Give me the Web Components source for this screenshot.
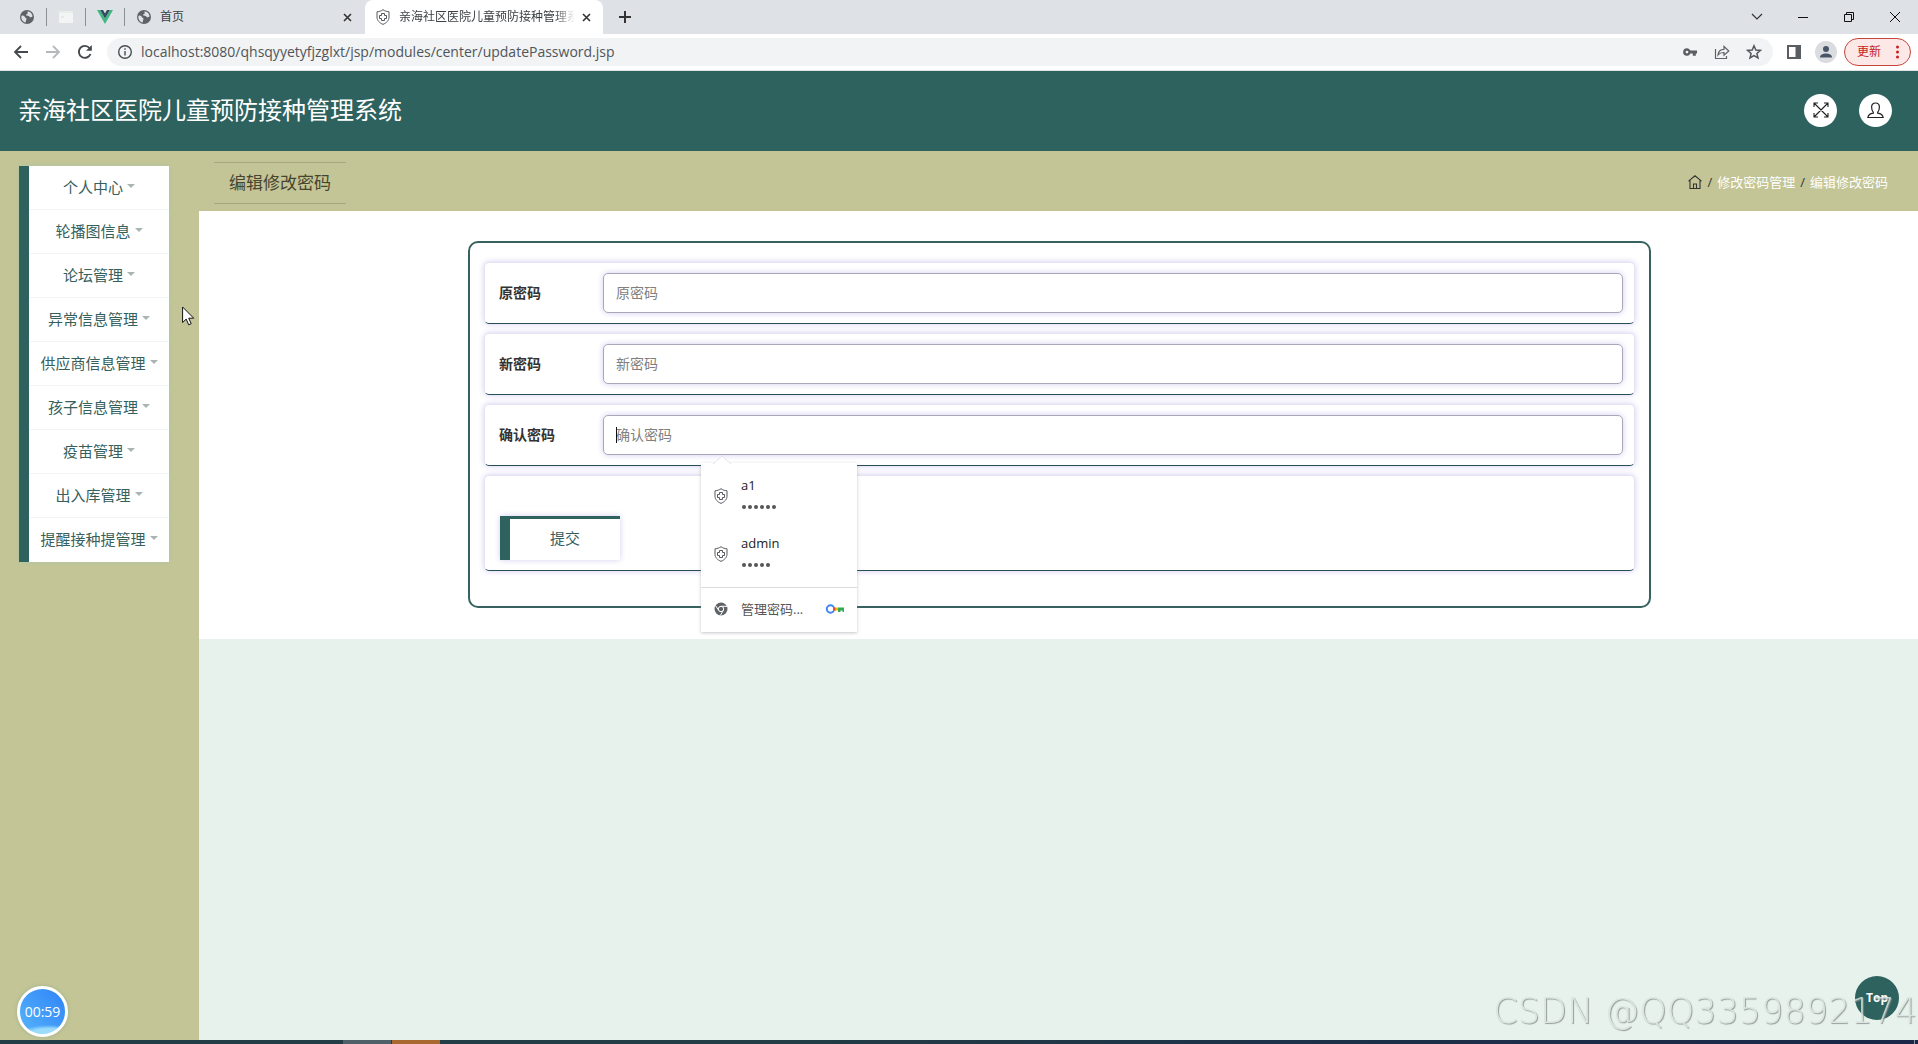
<!DOCTYPE html>
<html lang="zh-CN">
<head>
<meta charset="utf-8">
<title>亲海社区医院儿童预防接种管理系统</title>
<style>
html,body{margin:0;height:100%}
body{font-family:"Open Sans","Noto Sans CJK SC",sans-serif;font-size:14px;color:#333;
--teal:#2e625f;--olive:#c3c596;--mint:#e7f2ec;overflow:hidden}
</style>
</head>
<body>
<app-page></app-page>
<script>
const define=(name,html)=>{
  const t=document.createElement('template');
  t.innerHTML='<style>*{box-sizing:border-box}svg{display:block;flex:none}button{font:inherit;border:0;background:none;padding:0;margin:0;color:inherit}a{color:inherit;text-decoration:none}</style>'+html;
  customElements.define(name,class extends HTMLElement{
    constructor(){super();this.attachShadow({mode:'open'}).append(t.content.cloneNode(true));}
    connectedCallback(){
      const r=this.shadowRoot;
      r.querySelectorAll('[data-attr]').forEach(n=>{
        const v=this.getAttribute(n.dataset.attr)||'';
        if(n.tagName==='INPUT'){n.placeholder=v}else n.textContent=v;
      });
    }
  });
};
const globe='<svg width="16" height="16" viewBox="0 0 16 16"><circle cx="8" cy="8" r="7" fill="#5f6368"/><path d="M3 6.5c1.500 0 2.500.5 2.800 1.500.3.9 1.700.6 1.700 1.900 0 1-.6 1-.6 2.100 0 .8-.2 1.500-.9 1.500C3.500 12.600 2 10 2.300 7.500zM8.500 2.600c-.2 1 .4 1.300 0 2.100-.4.700-1.400.5-1.400 1.300 0 .9 1.600.7 2.500 1 .9.400.9 1.300 1.800 1.300.9 0 1.700-.3 2.100-1C13.300 4.500 11 2.600 8.500 2.600z" fill="#dee1e6"/></svg>';
const shield='<svg width="16" height="16" viewBox="0 0 16 16" fill="none" stroke="#55585c"><path d="M8 .7C9.600 1.900 11.600 2.600 14 2.800v5.400c0 3.200-2.400 5.600-6 7.200-3.600-1.600-6-4-6-7.200V2.800C4.400 2.600 6.400 1.900 8 .7z"/><path stroke-linejoin="round" d="M6.500 4.500h3v2h2v3h-2v2h-3v-2h-2v-3h2z"/></svg>';
const close='<svg width="9" height="9" viewBox="0 0 9 9" stroke="#333" stroke-width="1.600"><path d="M1 1l7 7M8 1 1 8"/></svg>';

define('browser-tabs',`<style>
:host{display:flex;height:34px;background:#dee1e6;align-items:center;font-size:12px;color:#3c4043;flex:none}
.pin{width:38px;display:flex;justify-content:center}
.first{width:46px;padding-left:19px;display:flex}
.sep{width:1px;height:18px;background:#8b8e93}
.tab{display:flex;align-items:center;gap:8px;height:34px;line-height:16px}
.idle{width:240px;padding:0 13px 0 11px}
.active{width:238px;background:#fff;border-radius:8px 8px 0 0;padding:0 12px 0 10px}
.name{flex:1;min-width:0;white-space:nowrap;overflow:hidden}
.active .name{-webkit-mask-image:linear-gradient(90deg,#000 155px,transparent 176px);mask-image:linear-gradient(90deg,#000 155px,transparent 176px)}
.plus{margin-left:16px}
.win{margin-left:auto;display:flex;height:28px;align-items:center}
.win button{width:46px;display:flex;justify-content:center}
</style>
<div class="first">${globe}</div><i class="sep"></i>
<div class="pin"><svg width="16" height="16" viewBox="0 0 16 16"><path d="M1 2h14v12H1z" fill="#f3f4f4"/><path d="M1 2h14v2H1z" fill="#e8eee9"/><path d="M3 8h3" stroke="#dcdedf"/></svg></div><i class="sep"></i>
<div class="pin"><svg width="16" height="16" viewBox="0 0 16 16"><path d="M0 1h3.200L8 9.400 12.800 1H16L8 15z" fill="#41b883"/><path d="M3.200 1H6l2 3.500L10 1h2.800L8 9.400z" fill="#35495e"/></svg></div><i class="sep"></i>
<div class="tab idle">${globe}<span class="name">首页</span><button aria-label="关闭">${close}</button></div>
<div class="tab active">${shield}<span class="name">亲海社区医院儿童预防接种管理系统</span><button aria-label="关闭">${close}</button></div>
<button class="plus" aria-label="新标签页"><svg width="12" height="12" viewBox="0 0 12 12" stroke="#333" stroke-width="2"><path d="M6 0v12M0 6h12"/></svg></button>
<div class="win">
<button aria-label="搜索标签页"><svg width="12" height="8" viewBox="0 0 12 8" fill="none" stroke="#333" stroke-width="1.200"><path d="M1 1l5 5 5-5"/></svg></button>
<button aria-label="最小化"><svg width="10" height="10" viewBox="0 0 10 10" stroke="#111"><path d="M0 5.500h10"/></svg></button>
<button aria-label="还原"><svg width="10" height="10" viewBox="0 0 10 10" fill="none" stroke="#111"><path d="M.5 2.500h7v7h-7zM2.500 2.500v-2h7v7h-2"/></svg></button>
<button aria-label="关闭窗口"><svg width="10" height="10" viewBox="0 0 10 10" stroke="#111"><path d="M0 0l10 10M10 0 0 10"/></svg></button>
</div>`);

define('browser-toolbar',`<style>
:host{display:flex;height:37px;background:#fff;align-items:center;padding:0 7px 1px 12px;border-bottom:1px solid #dfe3e3;flex:none;box-sizing:border-box}
.navs{display:flex;gap:14px}
.bar{flex:1;display:flex;align-items:center;height:28px;border-radius:14px;background:#f1f3f4;margin-left:13px;padding:0 11px 0 10px;gap:8px}
input{flex:1;min-width:0;border:0;background:none;outline:0;padding:0;font:14px/20px "Open Sans","Noto Sans CJK SC",sans-serif;color:#50555a}
.acts{display:flex;gap:16px}
.panel{margin-left:14px}
.me{margin:0 7px 0 14px}
.upd{display:flex;align-items:center;justify-content:space-between;width:67px;height:28px;border:1px solid #c5453d;border-radius:14px;background:#fce8e6;color:#c5221f;font-size:12px;padding:0 11px 0 12px;line-height:16px}
</style>
<div class="navs">
<button aria-label="后退"><svg width="18" height="18" viewBox="0 0 18 18" fill="none" stroke="#45494d" stroke-width="1.800"><path d="M16 9H3M9 3 3 9l6 6"/></svg></button>
<button aria-label="前进"><svg width="18" height="18" viewBox="0 0 18 18" fill="none" stroke="#b6b9bc" stroke-width="1.800"><path d="M2 9h13M9 3l6 6-6 6"/></svg></button>
<button aria-label="刷新"><svg width="18" height="18" viewBox="0 0 18 18" fill="none" stroke="#45494d" stroke-width="1.900"><path d="M14.500 11A6 6 0 1 1 13.500 5L15 6.500"/><path d="M15.800 2v5.800H10z" fill="#45494d" stroke="none"/></svg></button>
</div>
<div class="bar">
<svg width="16" height="16" viewBox="0 0 16 16" fill="none" stroke="#4a4e52" stroke-width="1.400"><circle cx="8" cy="8" r="6.300"/><path d="M8 7v4.500M8 4.300v1.500"/></svg>
<input aria-label="地址" value="localhost:8080/qhsqyyetyfjzglxt/jsp/modules/center/updatePassword.jsp">
<div class="acts">
<svg width="16" height="16" viewBox="0 0 16 16"><path fill="#5a5e62" fill-rule="evenodd" d="M5 4.200c1.600 0 2.800 1 3.400 2.400H15v3h-1.200v2.200h-3V9.600H8.400A3.800 3.800 0 1 1 5 4.200zm0 2.500a1.400 1.400 0 1 0 0 2.800 1.400 1.400 0 0 0 0-2.800z"/></svg>
<svg width="16" height="16" viewBox="0 0 16 16" fill="none" stroke="#5f6368" stroke-width="1.200"><path d="M1.500 5v9.500h11V12"/><path d="M4 11c.4-3.800 2.700-5.700 6-5.700V2.500L14.800 7 10 11.200V8.500C7.500 8.400 5.500 9 4 11z"/></svg>
<svg width="16" height="16" viewBox="0 0 16 16" fill="none" stroke="#54585c" stroke-width="1.500"><path d="M8 1.800l1.800 4.200 4.600.4-3.500 3 1.100 4.500L8 11.500l-4 2.400 1.100-4.500-3.500-3L6.200 6z"/></svg>
</div></div>
<svg class="panel" width="14" height="14" viewBox="0 0 14 14"><path fill="#5a5e62" fill-rule="evenodd" d="M0 0h14v14H0zM2 2v10h6.500V2z"/></svg>
<svg class="me" width="22" height="22" viewBox="0 0 22 22"><circle cx="11" cy="11" r="11" fill="#dadce0"/><circle cx="11" cy="8" r="3" fill="#4a5468"/><path d="M5 16.500c0-3 3-4 6-4s6 1 6 4z" fill="#4a5468"/></svg>
<button class="upd">更新<svg width="3" height="14" viewBox="0 0 3 14" fill="#c5221f"><circle cx="1.500" cy="2" r="1.500"/><circle cx="1.500" cy="7" r="1.500"/><circle cx="1.500" cy="12" r="1.500"/></svg></button>`);

define('app-header',`<style>
:host{display:flex;box-sizing:border-box;height:80px;flex:none;background:var(--teal);align-items:center;justify-content:space-between;padding:0 26px 2px 18px}
h1{margin:0;font-size:24px;font-weight:400;line-height:36px;color:#fff}
nav{display:flex;gap:22px}
button{width:33px;height:33px;border-radius:50%;background:#fff;display:flex;align-items:center;justify-content:center}
</style><h1>亲海社区医院儿童预防接种管理系统</h1>
<nav><button aria-label="全屏"><svg width="16" height="16" viewBox="0 0 16 16" fill="none" stroke="#222" stroke-width="1.100"><path d="M1 1l14 14M15 1 1 15M1 5V1h4M11 1h4v4M15 11v4h-4M5 15H1v-4"/></svg></button>
<button aria-label="用户"><svg width="17" height="17" viewBox="0 0 17 17" fill="none" stroke="#222" stroke-width="1.200"><path d="M6.300 10.200C4.800 8.800 4.600 6.700 4.600 5c0-2.400 1.600-4 3.900-4s3.900 1.600 3.900 4c0 1.700-.2 3.800-1.700 5.200v1c2.700.4 5 1.600 5.500 4.300H.8c.5-2.700 2.800-3.900 5.500-4.300z"/></svg></button></nav>`);

define('menu-item',`<style>
:host{display:block;box-sizing:border-box;height:44px;border-bottom:1px solid #f1f5f7}
:host(:last-child){border-bottom-color:#fff}
a{height:100%;display:flex;align-items:center;justify-content:center;gap:4px;font-size:15px;line-height:22px;padding-bottom:2px;color:#36605c;white-space:nowrap}
i{border:4px solid transparent;border-top-color:#aab4b3;border-bottom:0;margin-bottom:2px}
</style><a href="#"><slot></slot><i></i></a>`);

define('side-menu',`<style>
:host{display:block;box-sizing:border-box;width:199px;flex:none;background:var(--olive);padding:15px 30px 0 19px}
nav{background:#fff;border-left:10px solid var(--teal);box-shadow:0 0 4px #a9c6a9}
</style><nav><slot></slot></nav>`);

define('page-title',`<style>
:host{display:flex;box-sizing:border-box;height:60px;background:var(--olive);align-items:center;justify-content:space-between;padding:3px 30px 0 15px}
h2{margin:0;border:1px solid #a5a77d;border-width:1px 0;padding:0 15px;font-size:17px;font-weight:400;line-height:40px;color:#48452f}
.crumb{display:flex;align-items:center;gap:5px;font-size:13px;line-height:20px;color:#333;padding-bottom:2px}
a{color:#fff}
</style><h2>编辑修改密码</h2><div class="crumb"><a href="#" aria-label="首页"><svg width="14" height="14" viewBox="0 0 14 14" fill="none" stroke="#333" stroke-width="1.100"><path d="M.5 6.200 7 .8l6.500 5.400M2 5.500v8h10v-8M5.500 13.500V9h3v4.500"/></svg></a><span>/</span><a href="#">修改密码管理</a><span>/</span><a href="#">编辑修改密码</a></div>`);

define('form-row',`<style>
:host{display:flex;box-sizing:border-box;align-items:center;height:62px;padding:0 11px 0 14px;background:#fff;border-radius:5px;border:1px solid #e6e3f3;border-bottom-color:#284f57;box-shadow:0 0 6px #d2cdf0}
label{width:104px;font-weight:700;font-size:14px;line-height:20px}
.field{flex:1;position:relative;display:flex}
input{flex:1;min-width:0;height:40px;border:1px solid #aaa8b8;border-radius:5px;padding:0 12px 2px;background:#fff;outline:0;font:14px/20px "Open Sans","Noto Sans CJK SC",sans-serif;box-shadow:0 0 6px #d2cdf0}
input::placeholder{color:#808080;opacity:1}
.caret{display:none;position:absolute;left:13px;top:12px;width:1px;height:16px;background:#111}
:host([focused]) .caret{display:block}
</style><label for="f" data-attr="label"></label><div class="field"><input id="f" type="password" data-attr="label"><i class="caret"></i><slot></slot></div>`);

define('form-actions',`<style>
:host{display:block;box-sizing:border-box;height:96px;padding:40px 10px 0 15px;background:#fff;border-radius:5px;border:1px solid #e6e3f3;border-bottom-color:#284f57;box-shadow:0 0 6px #d2cdf0}
button{width:120px;height:44px;border-left:10px solid var(--teal);border-top:3px solid var(--teal);padding-bottom:4px;background:#fff;font-size:15px;line-height:22px;color:#36605c;box-shadow:0 0 6px #d2cdf0}
</style><button type="submit">提交</button>`);

define('password-form',`<style>
:host{display:block;background:#fff;padding:30px 267px 31px 269px}
form{display:flex;flex-direction:column;gap:9px;border:2px solid #38625f;border-radius:10px;padding:19px 14px 35px}
</style><form onsubmit="return false"><form-row label="原密码"></form-row><form-row label="新密码"></form-row><form-row label="确认密码" focused><saved-logins></saved-logins></form-row><form-actions></form-actions></form>`);

define('saved-logins',`<style>
:host{position:absolute;box-sizing:border-box;z-index:3;left:98px;top:48px;width:156px;background:#fff;box-shadow:0 1px 3px #8b8e9580;font-size:13px;color:#222;padding-top:4px}
.tip{position:absolute;top:-8px;left:12px;fill:#fff;stroke:#e4e1f0}
button{display:flex;align-items:center;gap:12px;width:100%;height:58px;padding:0 12px;text-align:left}
span{display:block;line-height:22px}
.dots{display:flex;gap:2px;height:22px;align-items:center;padding-left:1px}
.dots i{width:4px;height:4px;border-radius:50%;background:#555}
.foot{height:45px;border-top:1px solid #dcdcdc;margin-top:4px;padding-bottom:2px;color:#555}
.foot svg:last-child{margin-left:auto}
</style><svg class="tip" width="18" height="9" viewBox="0 0 18 9"><path d="M-1 10l10-9 10 9z"/></svg>
<button>${shield}<div><span>a1</span><div class="dots"><i></i><i></i><i></i><i></i><i></i><i></i></div></div></button>
<button>${shield}<div><span>admin</span><div class="dots"><i></i><i></i><i></i><i></i><i></i></div></div></button>
<button class="foot"><svg width="16" height="16" viewBox="0 0 16 16"><circle cx="8" cy="8" r="6.500" fill="#5f6368"/><circle cx="8" cy="8" r="2.700" fill="none" stroke="#fff"/><path d="M8 5.300h6M5.700 9.400 2.500 4.500M10.300 9.400l-3 5" stroke="#fff"/></svg><span>管理密码...</span><svg width="20" height="12" viewBox="0 0 20 12"><circle cx="5.500" cy="6" r="3.700" fill="none" stroke="#4285f4" stroke-width="2"/><path d="M9 4.500h4v3H9z" fill="#fbbc04"/><path d="M8.500 4.500h2v3h-2z" fill="#ea4335"/><path d="M13 4.500h6V9h-1.500V7.500h-2V9H13z" fill="#34a853"/></svg></button>`);

define('record-timer',`<style>
:host{position:absolute;box-sizing:border-box;left:17px;bottom:3px;width:51px;height:51px;border-radius:50%;border:3px solid #fff;background:radial-gradient(ellipse 30px 9px at 65% 100%,#9bdcfb 0 60%,transparent),linear-gradient(50deg,#56b4fb,#2f83f7);box-shadow:0 0 4px #9fb08b;display:flex;align-items:center;justify-content:center;color:#fff;font-size:14px;line-height:20px}
</style>00:59`);

define('back-top',`<style>
:host{position:absolute;right:19px;bottom:20px}
button{display:block;width:44px;height:44px;border-radius:50%;background:var(--teal);color:#fff;font-weight:700;font-size:12px;line-height:16px}
</style><button>Top</button>`);

define('water-mark',`<style>
:host{position:absolute;right:1px;bottom:8px;font:200 35px/42px "DejaVu Sans Light","DejaVu Sans",sans-serif;color:#dbe5df;text-shadow:1px 1px 1px #868d8a;opacity:.85;white-space:nowrap;pointer-events:none}
</style>CSDN @QQ3359892174`);

define('task-bar',`<style>
:host{display:flex;box-sizing:border-box;height:4px;flex:none;background:linear-gradient(90deg,#223d45 40%,#1c3048 70%,#1a2748);padding-left:343px;gap:1px}
i{width:48px;background:#4f6068}i+i{background:#a8682f}
i.end{width:1px;background:#8c93a5;margin-left:auto;margin-right:3px}
</style><i></i><i></i><i class="end"></i>`);

define('mouse-pointer',`<style>
:host{position:absolute;left:182px;top:155px}
</style><svg width="13" height="20" viewBox="0 0 13 20"><path d="M.6 1v15.500l3.600-3.400 2.500 5.700 2.500-1.100-2.500-5.500h5z" fill="#fff" stroke="#111"/></svg>`);

define('app-page',`<style>
:host{display:flex;flex-direction:column;min-height:100vh}
.body{flex:1;display:flex;position:relative;background:var(--mint)}
main{flex:1;min-width:0}
</style>
<browser-tabs></browser-tabs><browser-toolbar></browser-toolbar><app-header></app-header>
<div class="body"><side-menu>
<menu-item>个人中心</menu-item><menu-item>轮播图信息</menu-item><menu-item>论坛管理</menu-item><menu-item>异常信息管理</menu-item><menu-item>供应商信息管理</menu-item><menu-item>孩子信息管理</menu-item><menu-item>疫苗管理</menu-item><menu-item>出入库管理</menu-item><menu-item>提醒接种提管理</menu-item>
</side-menu><main><page-title></page-title><password-form></password-form></main>
<record-timer></record-timer><mouse-pointer></mouse-pointer><back-top></back-top><water-mark></water-mark></div>
<task-bar></task-bar>`);
</script>
</body>
</html>
